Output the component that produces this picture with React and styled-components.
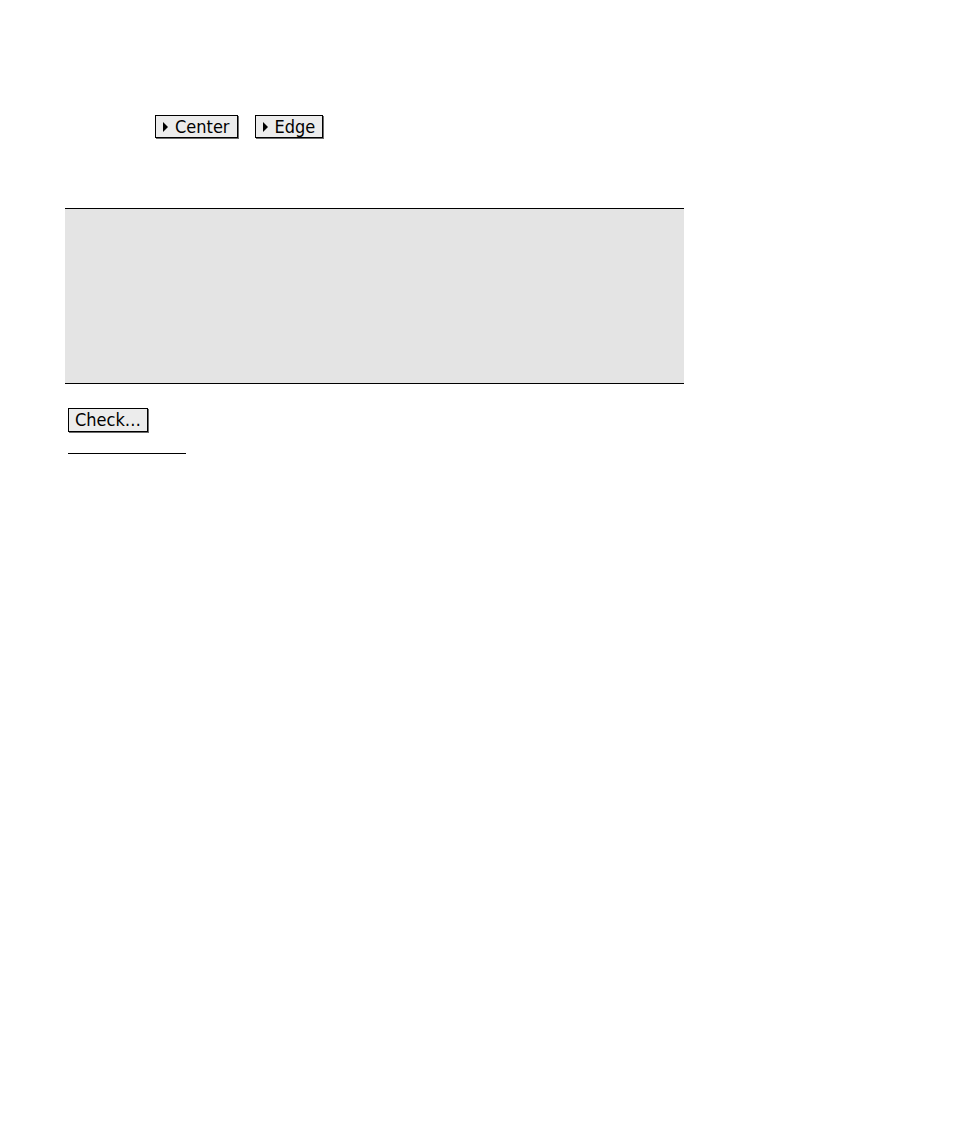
import React from 'react'
import styled, { createGlobalStyle } from 'styled-components'

const Global = createGlobalStyle`
  body {
    margin: 0;
    background: #fff;
    font-family: "DejaVu Sans Condensed", "DejaVu Sans", sans-serif;
  }
`

const App = () => {
  return (
    <Page>
      <Global />
      <Toolbar>
        <Button><Arrow />Center</Button>
        <Button><Arrow />Edge</Button>
      </Toolbar>
      <Panel />
      <Actions>
        <Button compact>Check…</Button>
      </Actions>
      <Rule />
    </Page>
  )
}

export default App

const Page = styled.div`
  width: 954px;
  min-height: 1146px;
  padding-top: 115px;
  box-sizing: border-box;
`
const Toolbar = styled.div`
  display: flex;
  gap: 17px;
  padding-left: 155px;
  height: 23px;
`
const Button = styled.button`
  display: flex;
  align-items: center;
  gap: 7px;
  height: ${p => (p.compact ? '24px' : '23px')};
  padding: ${p => (p.compact ? '0 6px' : '0 7px 0 7px')};
  margin: 0;
  font-family: "DejaVu Sans Condensed", "DejaVu Sans", sans-serif;
  font-size: 18px;
  line-height: 1;
  color: #000;
  background: #ececec;
  border: 1px solid #000;
  border-radius: 0;
  box-shadow: 1px 1px 0 #6b6b6b;
  box-sizing: border-box;
`
const Arrow = styled.span`
  width: 0;
  height: 0;
  border-top: 5px solid transparent;
  border-bottom: 5px solid transparent;
  border-left: 5px solid #000;
`
const Panel = styled.div`
  margin: 70px 0 0 65px;
  width: 619px;
  height: 174px;
  background: #e4e4e4;
  border-top: 1px solid #000;
  border-bottom: 1px solid #000;
`
const Actions = styled.div`
  display: flex;
  padding: 24px 0 0 68px;
`
const Rule = styled.div`
  margin: 21px 0 0 68px;
  width: 118px;
  height: 1px;
  background: #000;
`
